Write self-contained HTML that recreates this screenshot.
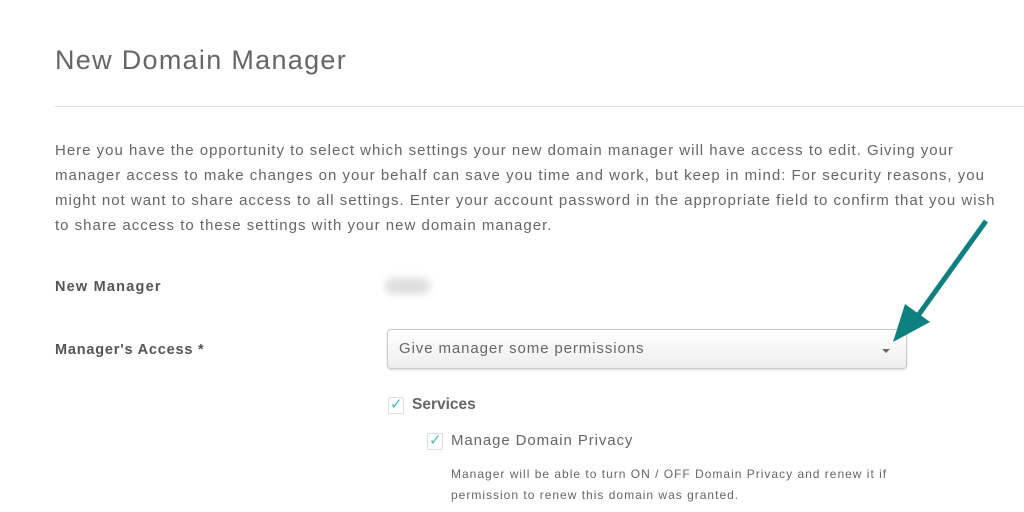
<!DOCTYPE html>
<html><head><style>
body{margin:0;width:1024px;height:512px;background:#fff;position:relative;overflow:hidden;font-family:"Liberation Sans",sans-serif;color:#555}
.a{position:absolute;white-space:nowrap}
</style></head><body>
<div class="a" style="left:55px;top:45px;font-size:27px;color:#666;letter-spacing:1.3px">New Domain Manager</div>
<div class="a" style="left:55px;top:106px;width:969px;height:1px;background:#ddd"></div>
<div class="a" style="left:55px;top:138px;font-size:15px;line-height:25px;color:#666;letter-spacing:1px">Here you have the opportunity to select which settings your new domain manager will have access to edit. Giving your<br>manager access to make changes on your behalf can save you time and work, but keep in mind: For security reasons, you<br>might not want to share access to all settings. Enter your account password in the appropriate field to confirm that you wish<br>to share access to these settings with your new domain manager.</div>
<div class="a" style="left:55px;top:279px;font-size:14.5px;font-weight:bold;color:#555;letter-spacing:1.2px">New Manager</div>
<div class="a" style="left:385px;top:278px;width:45px;height:16px;background:#ddd;border-radius:8px;filter:blur(4px)"></div>
<div class="a" style="left:55px;top:342px;font-size:14.5px;font-weight:bold;color:#555;letter-spacing:0.8px">Manager's Access *</div>
<div class="a" style="left:387px;top:329px;width:518px;height:38px;border:1px solid #ccc;border-radius:4px;background:linear-gradient(#fff,#eee);box-shadow:0 1px 2px rgba(0,0,0,.15)"></div>
<div class="a" style="left:399px;top:340px;font-size:15px;color:#666;letter-spacing:0.9px">Give manager some permissions</div>
<div class="a" style="left:882px;top:349px;width:0;height:0;border-left:4px solid transparent;border-right:4px solid transparent;border-top:4px solid #666"></div>
<div class="a" style="left:388px;top:397px;width:14px;height:15px;border:1px solid #ddd;border-radius:2px"></div>
<div class="a" style="left:390px;top:395px;font-size:15px;color:#4bb">✓</div>
<div class="a" style="left:412px;top:396px;font-size:15.5px;font-weight:bold;color:#666">Services</div>
<div class="a" style="left:427px;top:433px;width:14px;height:15px;border:1px solid #ddd;border-radius:2px"></div>
<div class="a" style="left:429px;top:431px;font-size:15px;color:#4bb">✓</div>
<div class="a" style="left:451px;top:432px;font-size:15px;color:#666;letter-spacing:0.9px">Manage Domain Privacy</div>
<div class="a" style="left:451px;top:464px;font-size:12px;line-height:21px;color:#666;letter-spacing:1px">Manager will be able to turn ON / OFF Domain Privacy and renew it if<br>permission to renew this domain was granted.</div>
<svg class="a" style="left:0;top:0" width="1024" height="512">
<line x1="986" y1="221" x2="917" y2="317" stroke="#0e8080" stroke-width="5"/>
<polygon points="893,342 905,304 930,322" fill="#0e8080"/>
</svg>
</body></html>
